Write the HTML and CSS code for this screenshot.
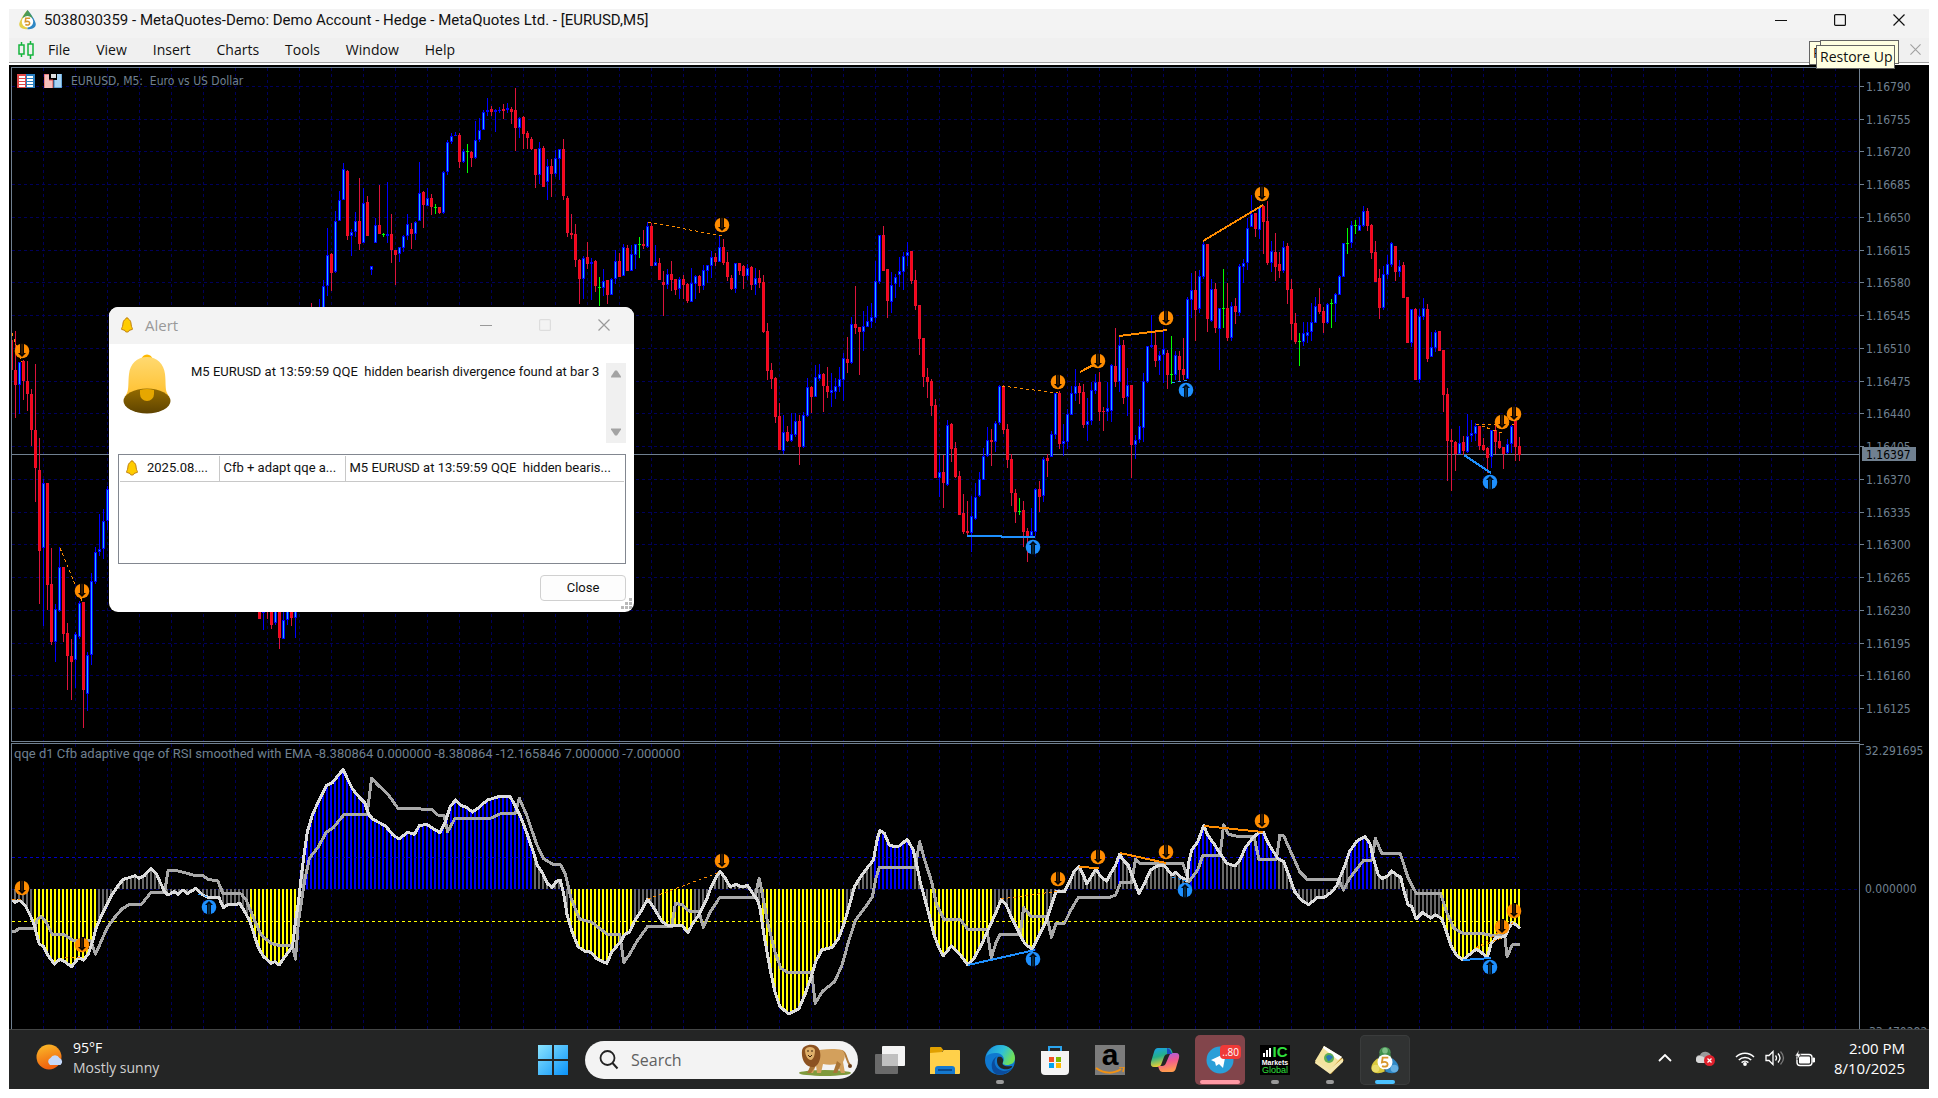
FILE: index.html
```html
<!DOCTYPE html>
<html lang="en">
<head>
<meta charset="utf-8">
<title>5038030359 - MetaQuotes-Demo: Demo Account - Hedge - MetaQuotes Ltd. - [EURUSD,M5]</title>
<link rel="stylesheet" href="styles.css">
</head>
<body>
<svg class="defs" aria-hidden="true">
  <defs>
    <symbol id="bell-small" viewBox="0 0 12 16"><path d="M6 0.800a1.300 1.300 0 0 1 1.300 1.300C9.500 3 10 5 10.200 8c.2 2 1.300 3 1.300 4.300L8 13.500a2 1.600 0 0 1-4 0L.5 12.300C.5 11 1.600 10 1.800 8 2 5 2.500 3 4.700 2.100A1.300 1.300 0 0 1 6 .8z" fill="#ffcc00" stroke="#c08010" stroke-width="1"/></symbol>
    <symbol id="mt5" viewBox="0 0 32 32">
      <circle cx="16" cy="8" r="6" fill="#4f9a5a"/><path d="M12 5a5 5 0 0 1 8 0l3 9H9z" fill="#3f8f4a"/>
      <path d="M8 14c-5 4-8 9-6 13 2 4 9 4 14 1z" fill="#d9c93c"/><path d="M24 14c5 4 8 9 6 13-2 4-9 4-14 1z" fill="#2f87c4"/>
      <circle cx="6" cy="25" r="4" fill="#e9dc6a"/><circle cx="26" cy="25" r="4" fill="#64aee0"/><circle cx="16" cy="6" r="3" fill="#7fc088"/>
      <circle cx="16" cy="18" r="8" fill="#fff"/>
      <path d="M19.500 13.500h-6l-.7 5c3-1 6-.5 6 2.200 0 2.300-3 3-6 1.800" fill="none" stroke="#d8962c" stroke-width="2"/>
    </symbol>
    <symbol id="mt5-drop" viewBox="0 0 21 24">
      <path d="M10.500 1C7 5 2 12 1 17c0 5 5 6 9.500 6z" fill="#e3cf4a"/><path d="M10.500 1c3.500 4 8.500 11 9.500 16 0 5-5 6-9.500 6z" fill="#2f87c4"/><path d="M10.500 1C8 4 6 7 4.500 10h12C15 7 13 4 10.500 1z" fill="#4a9a56"/>
      <circle cx="10.500" cy="14.500" r="6.500" fill="#fff"/>
      <path d="M13.500 10.500h-5l-.5 4c2.500-.8 5-.4 5 1.800 0 2-2.500 2.500-5 1.500" fill="none" stroke="#d8962c" stroke-width="1.800"/>
    </symbol>
    <symbol id="close-x" viewBox="0 0 12 12"><path d="M.5.500l11 11M11.500.500l-11 11" fill="none" stroke="currentColor" stroke-width="1.200"/></symbol>
    <symbol id="box" viewBox="0 0 12 12"><rect x=".6" y=".6" width="10.800" height="10.800" rx="1" fill="none" stroke="currentColor" stroke-width="1.200"/></symbol>
    <symbol id="dash" viewBox="0 0 12 12"><path d="M0 6.500h12" stroke="currentColor" stroke-width="1"/></symbol>
    <symbol id="mark-down" viewBox="0 0 16 16"><circle cx="8" cy="8" r="7.300" fill="#ff8c00"/><path d="M6 0v10H4l4 4 4-4h-2V0z" fill="#0a0500"/><path d="M8 1v10" stroke="#5a2c00"/></symbol>
    <symbol id="mark-up" viewBox="0 0 16 16"><circle cx="8" cy="8" r="7.300" fill="#1e90ff"/><path d="M6 16V6H4l4-4 4 4h-2v10z" fill="#000a18"/><path d="M8 15V5" stroke="#0a4a6a"/></symbol>
  </defs>
</svg>

<div class="desktop">
  <header class="titlebar">
    <svg class="icon-app"><use href="#mt5-drop"/></svg>
    <h1 class="title">5038030359 - MetaQuotes-Demo: Demo Account - Hedge - MetaQuotes Ltd. - [EURUSD,M5]</h1>
    <div class="caption">
      <button aria-label="Minimize"><svg><use href="#dash"/></svg></button>
      <button aria-label="Maximize"><svg><use href="#box"/></svg></button>
      <button aria-label="Close"><svg><use href="#close-x"/></svg></button>
    </div>
  </header>

  <nav class="menubar">
    <svg class="icon-candles" viewBox="0 0 16 18"><g fill="none" stroke="#14b43c" stroke-width="1.500"><path d="M3.500 1v3M3.500 13v3M12.500 0v3M12.500 14v4"/><rect x="1" y="4" width="5" height="9"/><rect x="10" y="3" width="5" height="11"/></g></svg>
    <button>File</button><button>View</button><button>Insert</button><button>Charts</button><button>Tools</button><button>Window</button><button>Help</button>
    <button class="mdi-close" aria-label="Close chart"><svg><use href="#close-x"/></svg></button>
    <div class="tip tip-a">R</div>
    <div class="tip tip-b"></div>
    <div class="tip tip-c">Restore Up</div>
  </nav>

  <main class="chart">
    <section class="panel price">
      <div class="plot">
        <svg class="canvas" id="price"></svg>
        <div class="legend">
          <svg class="icon-book" viewBox="0 0 18 14"><rect width="9" height="14" fill="#e04848"/><rect x="9" width="9" height="14" fill="#2a7fc0"/><path d="M2 3h6M2 6h6M2 9h6M2 12h6M10 3h6M10 6h6M10 9h6M10 12h6" stroke="#fff" stroke-width="2"/></svg>
          <svg class="icon-trade" viewBox="0 0 18 14"><path d="M0 0h5v6h4v8H0z" fill="#f6c0bc"/><path d="M18 0h-5v6h-3v8h8z" fill="#a8d4f4"/><path d="M0 14V0h5M9 14V6H5" fill="none" stroke="#e04848"/><path d="M18 0v14h-8V6" fill="none" stroke="#2a7fc0"/><path d="M7 0h5v4H7z" fill="#ddd"/></svg>
          <span>EURUSD, M5:&nbsp; Euro vs US Dollar</span>
        </div>
      </div>
      <svg class="axis" id="price-axis"></svg>
    </section>
    <section class="panel study">
      <div class="plot">
        <svg class="canvas" id="study"></svg>
        <div class="legend legend-study">qqe d1 Cfb adaptive qqe of RSI smoothed with EMA -8.380864 0.000000 -8.380864 -12.165846 7.000000 -7.000000</div>
      </div>
      <svg class="axis" id="study-axis"></svg>
    </section>

    <div class="dialog" role="dialog" aria-labelledby="alert-title">
      <div class="dialog-bar">
        <svg class="bell-s"><use href="#bell-small"/></svg>
        <h2 id="alert-title">Alert</h2>
        <div class="caption">
          <button aria-label="Minimize alert"><svg><use href="#dash"/></svg></button>
          <button class="faint" aria-label="Maximize alert" disabled><svg><use href="#box"/></svg></button>
          <button aria-label="Close alert"><svg><use href="#close-x"/></svg></button>
        </div>
      </div>
      <div class="dialog-body">
        <div class="message">
          <svg class="bell" viewBox="0 0 48 60">
            <defs><linearGradient id="gold" x2="0" y2="1"><stop stop-color="#ffd970"/><stop offset="1" stop-color="#ffbe28"/></linearGradient><linearGradient id="brown" x2="0" y2="1"><stop stop-color="#946b00"/><stop offset="1" stop-color="#5e4300"/></linearGradient></defs>
            <circle cx="24" cy="6" r="5.500" fill="#ffb900"/>
            <path d="M24 3c10 0 17 7 18 17 1 8 0 15 2 19 2 4 3 5 3 8H1c0-3 1-4 3-8 2-4 1-11 2-19C7 10 14 3 24 3z" fill="url(#gold)"/>
            <ellipse cx="24" cy="47" rx="23.500" ry="12.500" fill="url(#brown)"/>
            <path d="M17 36q7-2 14 0v4a7 7 0 0 1-14 0z" fill="#e6a700"/>
          </svg>
          <p>M5 EURUSD at 13:59:59 QQE&nbsp; hidden bearish divergence found at bar 3</p>
          <div class="scroll"><svg viewBox="0 0 10 8"><path d="M4 .5h2l4 6v1H0v-1z" fill="#a3a3a3"/></svg><svg viewBox="0 0 10 8"><path d="M4 7.500h2l4-6v-1H0v1z" fill="#a3a3a3"/></svg></div>
        </div>
        <div class="list">
          <table>
            <tr><td class="c1"><div><svg class="bell-s"><use href="#bell-small"/></svg>2025.08....</div></td><td class="c2">Cfb + adapt qqe a...</td><td>M5 EURUSD at 13:59:59 QQE&nbsp; hidden bearis...</td></tr>
          </table>
        </div>
        <button class="close-btn">Close</button>
      </div>
      <svg class="grip" viewBox="0 0 12 12"><path d="M9 0h3v3H9zM5 4h3v3H5zM9 4h3v3H9zM1 8h3v3H1zM5 8h3v3H5zM9 8h3v3H9z" fill="#b8b8b8"/></svg>
    </div>
  </main>

  <footer class="taskbar">
    <div class="weather">
      <svg viewBox="0 0 28 28"><defs><linearGradient id="sun" x2="0.300" y2="1"><stop stop-color="#fbbf2a"/><stop offset="1" stop-color="#f0600e"/></linearGradient></defs><circle cx="13" cy="13" r="12.500" fill="url(#sun)"/><path d="M14 21a4 4 0 0 1 .5-7 5 5 0 0 1 9 0 4 4 0 0 1 1 7z" fill="#c4d8fa"/></svg>
      <p>95°F<br><span>Mostly sunny</span></p>
    </div>
    <div class="apps">
      <button class="app" aria-label="Start"><svg viewBox="0 0 30 30"><defs><linearGradient id="win" x2="1" y2="1"><stop stop-color="#8ae4ff"/><stop offset="1" stop-color="#0a92f8"/></linearGradient></defs><path d="M0 0h14v14H0zM16 0h14v14H16zM0 16h14v14H0zM16 16h14v14H16z" fill="url(#win)"/></svg></button>
      <label class="search">
        <svg class="lens" viewBox="0 0 20 20"><circle cx="8.500" cy="8" r="7" fill="none" stroke="#222" stroke-width="1.800"/><path d="M13.500 13l5 5.500" stroke="#222" stroke-width="2"/></svg>
        <input type="text" placeholder="Search" aria-label="Search">
        <svg class="lion" viewBox="0 0 54 34">
          <ellipse cx="27" cy="30" rx="26" ry="3" fill="#7f9a3c"/>
          <path d="M44 8c5 2 4 10 8 14" fill="none" stroke="#b07a3a" stroke-width="2"/><circle cx="52" cy="23" r="2" fill="#6a3d18"/>
          <path d="M14 9c8-3 22-4 30-2 4 3 3 9 1 12l2 11h-4l-4-9c-5 1-10 1-14 0l-2 9h-4l-1-8-3 8h-4z" fill="#d3a05c"/>
          <path d="M14 20l-5 10h4l6-9zM39 18l-4 12h4l4-9z" fill="#a87436"/>
          <path d="M4 8C4 1 18-1 21 6c3 6 1 16-5 18C8 25 3 17 4 8z" fill="#8c5221"/>
          <path d="M7 7c1-4 9-4 10 0 0 4-1 9-4 10-4 0-6-6-6-10z" fill="#dfb06b"/><path d="M9 8h2M13 8h2M10 12l2 2 2-2" stroke="#3a200c" fill="none"/>
        </svg>
      </label>
      <button class="app" aria-label="Task view"><svg viewBox="0 0 30 30"><rect x="7" y="1" width="23" height="20" rx="1" fill="#f4f4f4"/><rect y="9" width="23" height="20" rx="1" fill="#777" fill-opacity=".85"/><rect x="7" y="9" width="16" height="12" fill="#c0c0c0"/></svg></button>
      <button class="app" aria-label="File Explorer"><svg viewBox="0 0 30 30"><path d="M0 3q0-1 1-1h10l3 4h-2v4H0z" fill="#e0a000"/><path d="M0 8l12-1 2-2h15q1 0 1 1v22q0 1-1 1H0z" fill="#ffd04a"/><path d="M5 29v-5q0-3 3-3h14q3 0 3 3v5z" fill="#1579cf"/><path d="M8 25h14" stroke="#0b4a8c" stroke-width="2"/></svg></button>
      <button class="app run" aria-label="Edge"><svg viewBox="0 0 30 30"><defs><linearGradient id="edge" x2="1" y2=".4"><stop stop-color="#1a8fe0"/><stop offset=".6" stop-color="#2ec0d8"/><stop offset="1" stop-color="#6fe05a"/></linearGradient></defs><circle cx="15" cy="15" r="15" fill="#0f78d0"/><path d="M1 12C3 4 9 0 15 0c9 0 15 6 15 13 0 5-4 7-8 7-3 0-5-1-4-3 2-2 1-8-6-9C6 8 3 9 1 12z" fill="url(#edge)"/><path d="M13 11c-6 3-4 14 6 15 3 0 6-1 8-3-4 6-11 8-16 6C5 26 5 14 13 11z" fill="#0b4c9c"/><path d="M13 12c3-1 6 1 5 5-2 3 2 5 8 4 2 0 1 1 0 2-5 3-14 1-14-7 0-2 0-3 1-4z" fill="#242525"/></svg></button>
      <button class="app" aria-label="Store"><svg viewBox="0 0 30 30"><path d="M9 7V2h12v5" fill="none" stroke="#2aa4ee" stroke-width="2"/><path d="M1 6h28v20q0 4-4 4H5q-4 0-4-4z" fill="#f4f4f4"/><path d="M9 12h5v5H9z" fill="#f25022"/><path d="M16 12h5v5h-5z" fill="#7fba00"/><path d="M9 18h5v5H9z" fill="#00a4ef"/><path d="M16 18h5v5h-5z" fill="#ffb900"/></svg></button>
      <button class="app" aria-label="Amazon"><span class="amazon">a<svg viewBox="0 0 30 8"><path d="M1 1c8 6 18 6 25 1" fill="none" stroke="#f29111" stroke-width="2"/><path d="M24 0l5 0-1 5" fill="none" stroke="#f29111" stroke-width="1.500"/></svg></span></button>
      <button class="app" aria-label="Copilot"><svg viewBox="0 0 30 30"><defs><linearGradient id="cpa" x2=".3" y2="1"><stop stop-color="#18a0f0"/><stop offset=".5" stop-color="#25b08a"/><stop offset="1" stop-color="#f4d030"/></linearGradient><linearGradient id="cpb" x2=".2" y2="1"><stop stop-color="#a060f0"/><stop offset=".5" stop-color="#f05a90"/><stop offset="1" stop-color="#ff9a50"/></linearGradient></defs><path d="M8 3h11q2 0 3 3l1 3h-5q-3 0-4 3l-3 8q-1 2-4 2H4q-4 0-3-5L4 7q1-4 4-4z" fill="url(#cpa)"/><path d="M22 27H12q-2 0-3-3l-1-3h4q3 0 4-3l3-7q1-3 4-3h3q4 0 3 5l-3 10q-1 4-4 4z" fill="url(#cpb)"/><path d="M17 3q3 0 5 6h-5z" fill="#1a4ac0"/></svg></button>
      <button class="app alerting" aria-label="Telegram"><svg viewBox="0 0 30 30"><circle cx="15" cy="15" r="13.500" fill="#2a9fd8"/><path d="M6 15l15-7-3 15-4-4-3 2-1-4z" fill="#fff"/></svg><span class="badge">..80</span></button>
      <button class="app run" aria-label="IC Markets Global"><span class="ic"><b><svg viewBox="0 0 10 10"><path d="M0 6h2v4H0zM3 3h2v7H3zM6 1h2v9H6z" fill="#fff"/></svg>IC</b><i>Markets</i><em>Global</em></span></button>
      <button class="app run" aria-label="Strategy book"><svg viewBox="0 0 30 30"><path d="M9 1l20 14-13 14L0 18z" fill="#c9962a"/><path d="M1 15l14 9 13-11v4L15 29 0 18z" fill="#f4e7b0"/><path d="M9 1l18 11-12 13L0 16z" fill="#f4e4a0"/><path d="M9 1l18 11-4 3L8 3z" fill="#fff"/><circle cx="14" cy="13" r="5" fill="#5fae52"/><path d="M11 12c2-3 5-2 7 0-2 2-3 4-5 4z" fill="#2a78b8"/></svg></button>
      <button class="app current" aria-label="MetaTrader 5"><svg><use href="#mt5"/></svg></button>
    </div>
    <div class="tray">
      <svg class="t-chev" viewBox="0 0 14 8"><path d="M1 7l6-6 6 6" fill="none" stroke="#fff" stroke-width="1.800"/></svg>
      <svg class="t-cloud" viewBox="0 0 20 16"><path d="M5 13a4 4 0 0 1 0-8 6 6 0 0 1 11 1 4 4 0 0 1 1 7z" fill="#9a9a9a"/><path d="M4 13a3.500 3.500 0 0 1 1-7c4 0 6 3 9 7z" fill="#d8d8d8"/><circle cx="14.500" cy="10.500" r="5.500" fill="#e0202c"/><path d="M12.500 8.500l4 4M16.500 8.500l-4 4" stroke="#fff" stroke-width="1.300"/></svg>
      <svg class="t-wifi" viewBox="0 0 20 15"><g fill="none" stroke="#fff" stroke-width="1.500"><path d="M1 6a12.500 12.500 0 0 1 18 0M3.800 9a8.700 8.700 0 0 1 12.400 0M6.600 11.600a5 5 0 0 1 6.800 0"/></g><circle cx="10" cy="13" r="1.900" fill="#fff"/></svg>
      <svg class="t-snd" viewBox="0 0 20 16"><path d="M1 5.500h3l4-4v13l-4-4H1z" fill="none" stroke="#fff" stroke-width="1.300"/><path d="M10.500 5.500q2 2.500 0 5M13 3.500q4 4.500 0 9" fill="none" stroke="#fff" stroke-width="1.300"/><path d="M15.500 1.500q6 6.500 0 13" fill="none" stroke="#777" stroke-width="1.300"/></svg>
      <svg class="t-bat" viewBox="0 0 21 17"><rect x="2" y="4.500" width="15" height="11" rx="3" fill="none" stroke="#fff" stroke-width="1.400"/><rect x="4" y="6.500" width="11" height="7" rx="1" fill="#fff"/><path d="M18 8h1.500v4H18z" fill="#fff" stroke="#fff"/><path d="M4 0L0 6h2.500L2 10l4-6H3.500z" fill="#fff" stroke="#242525" stroke-width=".5"/></svg>
      <p class="clock">2:00 PM<br>8/10/2025</p>
    </div>
  </footer>
</div>
<script src="chart.js"></script>
</body>
</html>
```
FILE: styles.css
```css
* { box-sizing: border-box; }
body { margin: 0; background: #fff; font: 14px/20px "Open Sans", "Noto Sans", sans-serif; color: #111; }
h1, h2, p { margin: 0; font-weight: 400; }
button { border: 0; padding: 0; background: none; font: inherit; color: inherit; }
svg { display: block; flex: none; }
.defs { position: absolute; width: 0; height: 0; }

.desktop { display: flex; flex-direction: column; height: 100vh; padding: 9px; }

.titlebar { display: flex; align-items: center; height: 29px; padding: 0 24px 8px 8px; background: #f3f3f3; }
.icon-app { width: 21px; height: 21px; margin-right: 6px; }
.title { flex: 1; font: 15px/20px Roboto, sans-serif; white-space: nowrap; }
.caption { display: flex; align-items: center; gap: 47px; }
.caption svg { width: 12px; height: 12px; }

.menubar { position: relative; display: flex; align-items: center; height: 27px; padding: 0 8px 2px 9px; background: #f0f0f0; border-bottom: 2px solid #fff; box-shadow: inset 0 -1px #a0a0a0; }
.icon-candles { width: 16px; height: 18px; margin-right: 1px; }
.menubar button { padding: 0 13px; }
.menubar .mdi-close { margin-left: auto; padding: 0; color: #a0a0a0; }
.mdi-close svg { width: 11px; height: 11px; }
.tip { position: absolute; width: 79px; height: 24px; padding: 1px 3px; background: #ffffe1; border: 1px solid #646464; line-height: 20px; white-space: nowrap; }
.tip-a { right: 41px; top: 3px; }
.tip-b { right: 30px; top: 2px; }
.tip-c { right: 34px; top: 7px; z-index: 1; }

.chart { position: relative; flex: 1; display: flex; flex-direction: column; gap: 1px; min-height: 0; padding: 2px 0 0 2px; background: #000; color: #708090; font: 12px/16px "DejaVu Sans Condensed", "DejaVu Sans", sans-serif; }
.panel { display: grid; grid-template-columns: 1fr 69px; min-height: 0; }
.price { flex: 675; }
.study { flex: 286; }
.plot { position: relative; border: 1px solid #708090; min-height: 0; overflow: hidden; }
.study .plot { border-bottom: 0; }
.canvas { position: absolute; inset: 0; width: 100%; height: 100%; }
.axis { width: 69px; height: 100%; min-height: 0; overflow: hidden; }
.axis text { fill: #708090; font-size: 12px; }
.axis .bid { fill: #000; }
.legend { position: relative; display: flex; align-items: center; gap: 9px; padding: 5px; white-space: nowrap; }
.legend-study { padding: 2px; font: 13px/16px Roboto, sans-serif; }
.icon-book, .icon-trade { width: 18px; height: 14px; }

.dialog { position: absolute; left: 100px; top: 242px; width: 525px; height: 305px; display: flex; flex-direction: column; background: #fff; border-radius: 9px; overflow: hidden; color: #111; font: 13px/16px Roboto, sans-serif; }
.dialog-bar { display: flex; align-items: center; height: 37px; padding: 0 24px 2px 12px; background: #f3f3f3; color: #999; }
.dialog-bar h2 { flex: 1; padding-left: 12px; font: 15px/20px "Open Sans", sans-serif; }
.bell-s { width: 12px; height: 16px; }
.faint { color: #ddd; }
.dialog-body { flex: 1; display: flex; flex-direction: column; padding: 10px 8px 11px 9px; }
.message { display: flex; align-items: flex-start; height: 100px; padding-left: 5px; }
.bell { width: 48px; height: 60px; }
.message p { flex: 1; min-width: 0; padding: 10px 0 0 20px; white-space: nowrap; }
.scroll { flex: none; display: flex; flex-direction: column; justify-content: space-between; align-items: center; width: 20px; height: 80px; margin-top: 9px; padding: 7px 0; background: #f0f0f0; }
.scroll svg { width: 10px; height: 8px; }
.list { height: 110px; padding: 1px; border: 1px solid #828790; }
.list table { width: 100%; table-layout: fixed; border-collapse: collapse; white-space: nowrap; }
.list td { height: 25px; padding: 0 4px; border-bottom: 1px solid #c8c8c8; overflow: hidden; }
.list td + td { border-left: 1px solid #c8c8c8; }
.list .c1 { width: 99px; }
.list .c1 div { display: flex; align-items: center; gap: 9px; padding-left: 2px; }
.list .c2 { width: 126px; }
.close-btn { align-self: flex-end; width: 86px; height: 26px; margin-top: 11px; background: #fdfdfd; border: 1px solid #d0d0d0; border-radius: 4px; }
.grip { position: absolute; right: 2px; bottom: 2px; width: 12px; height: 12px; }

.taskbar { display: grid; grid-template-columns: 1fr auto 1fr; align-items: center; height: 60px; background: #242525; border-top: 1px solid #444646; color: #fff; }
.weather { display: flex; align-items: center; gap: 9px; padding: 0 0 3px 27px; }
.weather svg { width: 28px; height: 28px; }
.weather span { color: #d0d0d0; }
.apps { display: flex; align-items: center; gap: 5px; }
.app { position: relative; display: flex; justify-content: center; align-items: center; width: 50px; height: 50px; border-radius: 5px; }
.app > svg { width: 30px; height: 30px; }
.run::after, .alerting::after, .current::after { content: ""; position: absolute; left: 50%; bottom: 1px; width: 8px; height: 4px; margin-left: -4px; border-radius: 2px; background: #9a9a9a; }
.alerting { background: #82454b; }
.alerting::after { width: 40px; margin-left: -20px; background: #ff99a4; }
.current { background: #303232; box-shadow: inset 0 0 0 1px #3a3c3c; }
.current::after { width: 20px; margin-left: -10px; background: #4cc2ff; }
.badge { position: absolute; right: 4px; top: 10px; height: 14px; padding: 0 2px; border-radius: 4px; background: #f03a38; font-size: 10px; line-height: 14px; }
.amazon { display: flex; flex-direction: column; align-items: center; width: 30px; height: 30px; background: #7c7c7c; color: #000; font: 700 30px/20px "Liberation Sans", sans-serif; }
.amazon svg { width: 30px; height: 8px; margin-top: 2px; }
.ic { display: flex; flex-direction: column; align-items: center; width: 30px; height: 30px; background: #000; color: #fff; font: 8px/8px "Liberation Sans", sans-serif; }
.ic b { display: flex; align-items: flex-end; color: #2fe03c; font-size: 15px; line-height: 14px; }
.ic b svg { width: 10px; height: 10px; margin-bottom: 2px; }
.ic i { font-style: normal; font-weight: 700; font-size: 7px; line-height: 7px; }
.ic em { font-style: normal; color: #2fe03c; font-size: 9px; line-height: 9px; }
.search { display: flex; align-items: center; width: 273px; height: 38px; margin: 0 2px; padding: 0 6px 0 14px; border-radius: 19px; background: #f3f3f3; }
.lens { width: 20px; height: 20px; }
.search input { flex: 1; min-width: 0; padding: 0 0 0 12px; border: 0; background: none; font: 16px/20px "Open Sans", sans-serif; }
.search input::placeholder { color: #606060; opacity: 1; }
.lion { width: 54px; height: 34px; }
.tray { display: flex; align-items: center; justify-content: flex-end; padding: 0 24px 3px 0; }
.t-chev { width: 14px; height: 8px; margin-right: 23px; }
.t-cloud { width: 20px; height: 16px; margin-right: 20px; }
.t-wifi { width: 20px; height: 15px; margin-right: 10px; }
.t-snd { width: 20px; height: 16px; margin-right: 10px; }
.t-bat { width: 21px; height: 17px; }
.clock { width: 89px; font-size: 15px; text-align: right; }
```
FILE: chart.js
```js
const NS = "http://www.w3.org/2000/svg";
const STEP = 4;

function add(parent, tag, attrs, text) {
  const node = document.createElementNS(NS, tag);
  for (const k in attrs) node.setAttribute(k, attrs[k]);
  if (text) node.textContent = text;
  parent.appendChild(node);
  return node;
}

/* Each run of bars starts at x; levels are high, body top, body bottom, low,
   counted from y0 in steps of 1/k px. r = falling, b = rising, g = unchanged. */
const runs = [
  { x: 11, y0: 80, k: 2.306, bars: "r563,600,668,670 r578,668,703,779 b650,650,703,771 r646,648,694,738 r648,694,725,763 r713,725,808,843 r656,808,895,973 r826,899,1085,1208 b920,930,1080,1258 r930,930,1165,1222 r1080,1163,1296,1303 b1208,1220,1296,1341 b1078,1122,1225,1227 r1122,1124,1277,1296 r1253,1275,1329,1407 r1289,1329,1341,1429 b1272,1277,1338,1403 b1201,1205,1284,1289 r1203,1204,1407,1494 b1320,1327,1415,1456 b1137,1156,1325,1348 b1077,1089,1158,1163 b1001,1082,1089,1098 b989,1016,1082,1104 b937,944,1016,1037" },
  { x: 259, y0: 80, k: 2.306, bars: "r1200,1200,1243,1243 b1200,1200,1230,1268 r1200,1210,1215,1243 r1200,1200,1257,1265 b1200,1200,1252,1257 r1200,1200,1287,1312 b1227,1246,1289,1290 b1200,1200,1246,1257 r1200,1200,1241,1260 b1200,1200,1241,1286" },
  { x: 311, y0: 80, k: 2.306, bars: "r514,530,540,540 b540,540,560,560 b506,530,540,540 b461,474,530,560 b341,403,474,497 r399,401,444,487 b303,324,443,445 b256,276,324,324 b192,206,276,277 r208,210,360,369 b343,350,360,407 b305,326,350,362 r226,326,378,391 b250,283,377,377 r267,281,360,360 b428,428,438,449 b319,335,377,377 r243,335,354,354 g353,356,356,362 b236,356,360,376 r308,355,393,422 r392,392,403,473 b384,386,402,419 b357,359,387,397 b310,333,359,368 r330,343,354,390 b326,328,354,370 b190,260,326,326 r257,258,288,341 b250,272,290,291 r262,271,293,312 g286,294,294,310 r292,293,307,308 b210,213,306,308 b139,143,213,219 b122,129,143,148 b121,127,129,129 r122,127,190,202 b158,163,190,191 g148,163,163,214 r163,165,181,200 b94,138,181,182 b87,116,138,143 b70,73,116,116 b41,70,73,84 r60,68,73,83 b67,70,73,120 b63,70,72,75 r56,67,71,91 b52,65,70,77 r62,66,73,101 r18,70,111,163 b85,87,110,133 r84,86,125,158 r118,122,134,158 r132,135,160,162 r158,159,220,249 b142,157,220,239 r153,157,246,246 b183,198,236,277 r183,199,216,270 b162,181,216,224 b158,159,183,231 r136,158,267,277 r267,271,352,362 r309,352,357,366 r331,356,416,431 r413,414,460,517 b407,411,460,504 r374,409,424,436 b411,420,424,507 r414,418,475,490 g454,478,478,521 b436,463,480,497 r461,461,496,517 b456,458,495,494 b392,418,458,471" },
  { x: 619, y0: 180, k: 3, bars: "r220,243,290,290 b192,201,288,288 r195,204,272,272 b195,222,272,272 b192,192,224,268 g170,193,193,234 r150,192,198,207 b126,138,202,204 r130,138,258,258 b195,246,258,258 r234,249,300,300 r272,306,315,408 b267,282,315,327 r243,282,300,333 r297,297,330,345 b290,297,328,357 r285,297,315,357 r309,312,363,369 b264,309,366,366 b285,288,312,357 r285,288,318,339 b255,270,318,330 b255,255,273,309 b213,231,258,294 r219,231,246,258 b168,201,245,245 r177,201,249,255 r216,246,291,303 r285,294,327,330 b249,249,327,339 r249,249,273,285 r255,258,288,327 b252,264,288,300 r258,261,315,330 b264,294,315,345 r270,294,309,324 r285,306,456,459 r429,453,573,600 r549,570,597,627 r591,594,711,729 r669,708,810,810 b705,756,813,822 r738,756,783,786 b699,762,783,786 b699,723,765,771 r705,723,801,855 b696,705,801,804 b594,621,708,711 r618,621,651,699 b555,591,651,651 b552,582,597,603 r579,582,618,696 r561,618,636,654 b579,630,639,681 b594,618,636,657 b561,597,621,636 b519,534,600,663 r471,537,549,579 b411,432,549,552 r318,432,444,462 r441,441,456,585 b393,438,456,513 b378,423,441,441 b369,411,426,444 b243,303,414,429 b165,165,306,312 r138,165,273,273 r267,267,363,414 b276,315,366,399 b282,291,312,354 b231,273,285,321 b216,228,276,330 b186,216,228,258 r213,213,303,312 r270,300,378,390 r375,375,477,525 r474,474,591,621 r564,591,606,654 r597,603,678,708 r657,675,894,894 b825,876,894,951 r825,876,909,984 b720,735,915,918 r729,732,807,846 r786,804,891,894 r873,888,1005,1005 r942,999,1056,1062 r963,1053,1059,1068 b948,1008,1059,1116 b909,951,1017,1020 b876,897,948,951 b804,828,900,900 b741,780,828,831 r747,780,786,858 b723,729,786,816 b615,618,729,735 r615,618,750,762 r732,747,840,864 r822,837,939,978 r927,939,996,1029 g954,994,994,1005 r963,990,1056,1101 r1044,1053,1071,1146 b984,1053,1068,1071 b924,927,1056,1068 r903,927,951,996 b831,837,948,966 r822,834,843,891 b753,762,831,831 b639,639,765,777 r633,639,792,807 b732,783,792,828 b687,702,786,807 b618,639,705,705 b567,618,642,663 r609,618,639,672" },
  { x: 1083, y0: 170, k: 3, bars: "r642,666,765,774 b684,753,765,813 b636,660,753,765 b612,636,663,672 r606,636,726,753 r711,722,726,783 b636,714,726,753 b582,585,723,756 r474,588,636,651 b501,525,636,666 r510,525,684,702 b594,645,681,738 r645,645,825,924 b795,810,825,867 b717,768,810,819 b609,633,774,816 b528,528,636,639 b435,525,530,534 r480,525,573,591 b543,555,573,615 b483,537,555,639 r540,549,615,657 g498,613,613,642 b543,555,615,630 r543,558,600,636 r504,597,615,630 b381,387,627,627 b309,360,390,444 r303,360,420,513 b300,318,417,429 b213,222,321,327 r222,222,447,486 b327,357,453,456 r339,357,474,489 b414,414,477,600 g297,415,415,474 r339,414,504,513 b396,408,504,513 r384,408,426,462 b282,288,429,438 b267,279,291,339 b144,174,279,300 b75,132,171,171 r129,129,177,201 b108,111,180,207 r105,108,156,252 r93,153,279,285 b213,243,279,306 r189,246,291,333 r246,282,303,324 b213,231,303,309 r219,228,360,402 r327,357,462,510 r429,459,516,522 g489,514,514,588 b456,489,516,528 b456,486,498,519 b399,456,486,513 b381,408,459,459 r354,402,426,432 r411,423,459,489 b399,402,459,462 g387,400,400,474 b369,372,402,456 b315,318,375,375 b219,219,321,321 g174,220,220,252 b153,165,219,234 g150,166,166,192 b141,165,183,183 b108,123,168,171 r114,123,168,183 r162,165,249,267 r213,246,336,336 r297,324,414,447 b288,312,414,420 b255,282,315,327 b216,219,285,291 r228,228,306,333 b270,288,306,321 r276,285,384,384 r381,381,519,519 b417,417,519,531 r414,417,630,630 b417,438,630,639 b384,414,441,450 r402,417,567,576 b486,531,561,561 b480,486,534,546 r483,483,543,543 r540,540,675,726 r654,672,813,933 r777,810,816,963 r813,816,852,903 b768,819,852,852 r798,816,843,855 b732,798,846,849 b750,789,798,816 b759,768,792,813 r768,768,828,840 r804,825,840,843 r831,834,864,909 b780,780,861,894 r762,780,816,852 r789,813,834,837 r831,831,852,897 b807,822,849,852 b765,768,822,849 r750,753,831,873 r801,828,855,873" }
];

/* Oscillator curves in two sections: x = x0 + u/2.01, y = 735 + v/3. */
const fast = [
  [0, "24,495 30,502 40,495 52,515 62,545 70,575 74,600 79,627 88,635 97,662 109,687 121,672 130,680 144,695 158,668 168,675 178,655 186,620 193,580 203,545 213,515 225,480 238,450 248,433 262,427 271,422 280,430 290,422 304,400 315,418 323,445 331,470 338,480 350,470 358,478 368,465 376,476 394,460 405,478 418,487 440,487 449,518 460,507 470,510 482,505 492,530 502,558 510,595 520,640 530,665 545,685 552,680 561,690 575,660 588,635 594,560 600,500 606,420 612,350 618,290 628,240 640,200 656,152 668,143 690,103 698,130 708,160 718,180 733,203 742,240 750,253 775,273 790,300 802,312 820,292 833,298 843,272 858,268 868,278 884,293 895,262 905,215 916,195 925,210 937,217 950,231 962,218 980,195 1005,184 1025,184 1035,210 1045,240 1058,290 1072,350 1080,390 1090,412 1100,445 1110,457 1118,440 1126,435 1133,475 1140,540 1150,590 1162,635 1175,648 1188,652 1200,672 1220,685 1230,650 1248,620 1255,600 1266,590 1275,560 1290,525 1302,493 1315,520 1330,558 1340,570 1372,573 1383,593 1393,565 1405,540 1420,495 1430,455 1440,425 1448,410 1456,425 1468,455 1480,448 1490,455 1503,452 1515,480 1523,495"],
  [760, "0,520 8,600 20,700 30,770 40,815 58,837 78,822 90,780 102,730 112,680 124,645 145,637 158,610 168,570 178,520 190,455 200,430 215,400 228,375 236,310 241,287 250,295 260,330 270,335 280,333 296,313 308,345 315,390 322,440 340,540 350,600 360,640 368,663 385,633 400,655 418,690 430,670 445,630 460,580 475,530 485,493 495,510 505,545 520,590 532,625 547,643 560,605 575,560 585,515 595,470 612,470 622,440 632,408 641,395 650,420 657,447 675,402 685,425 697,438 705,415 715,390 723,358 730,375 740,390 750,430 762,475 773,445 785,405 800,392 812,390 820,405 828,420 835,412 845,425 858,437 862,380 868,345 880,320 892,272 900,300 912,325 925,355 938,385 955,393 965,375 975,340 990,310 1003,292 1012,292 1020,320 1030,345 1042,372 1053,380 1063,420 1075,470 1088,495 1103,509 1120,488 1135,487 1150,470 1160,450 1165,430 1175,395 1185,350 1200,318 1216,305 1226,325 1233,370 1243,420 1252,431 1262,422 1270,408 1278,418 1288,427 1295,470 1303,510 1310,515 1319,552 1332,532 1348,549 1358,540 1370,550 1380,590 1390,635 1400,660 1413,675 1425,660 1440,642 1450,652 1462,668 1470,625 1480,608 1498,605 1505,580 1512,563 1520,570 1528,580"]
];
const slow = [
  [0, "24,590 32,588 38,580 70,580 75,552 83,545 92,560 105,598 128,598 145,615 168,617 183,618 192,658 203,620 215,580 230,548 245,522 258,510 285,507 303,473 331,472 338,405 352,406 372,413 392,422 408,422 418,433 438,438 448,475 485,477 495,495 510,550 525,600 545,625 560,631 588,632 594,672 600,560 612,440 622,370 640,335 656,292 670,278 692,238 738,238 742,190 747,130 762,153 780,178 800,220 868,223 880,240 893,242 900,290 915,249 988,249 1005,237 1036,235 1044,190 1060,245 1078,325 1092,370 1110,387 1127,390 1137,420 1148,490 1165,552 1190,562 1220,597 1246,598 1254,682 1265,660 1280,620 1302,574 1350,574 1358,505 1372,510 1385,528 1405,528 1414,577 1428,530 1447,487 1518,487 1526,430"],
  [760, "0,440 15,560 30,650 42,700 55,712 104,713 111,805 125,770 150,740 165,690 178,620 192,555 210,520 226,485 233,430 240,397 312,397 321,320 330,370 345,440 355,510 370,553 402,553 418,583 456,583 465,668 475,620 483,598 523,598 530,518 545,545 577,545 586,607 595,566 612,565 625,525 640,487 703,487 715,480 725,442 747,442 755,373 763,385 850,385 862,440 880,405 890,362 925,360 932,270 942,298 960,304 993,304 1003,373 1038,373 1045,300 1053,303 1070,360 1085,410 1100,433 1163,434 1173,465 1185,430 1213,377 1230,375 1237,310 1250,355 1287,355 1302,425 1319,475 1368,475 1380,530 1395,580 1413,595 1450,595 1470,601 1497,600 1502,665 1512,630 1528,628"]
];

function points(sections) {
  return sections.flatMap(([x0, s]) => s.split(" ").map(p => {
    const [u, v] = p.split(",").map(Number);
    return [x0 + u / 2.0103, 735 + v / 3];
  }));
}

function grid(g, top, bottom, rows) {
  let d = "";
  for (let x = 43; x < 1859; x += 32) d += `M${x + .5} ${top}V${bottom}`;
  for (const y of rows) d += `M12 ${y + .5}H1859`;
  add(g, "path", { d, stroke: "#00005c", "stroke-dasharray": "3 3", fill: "none" });
}

function segments(g, list) {
  for (const [c, dashed, x1, y1, x2, y2] of list) {
    const a = { x1, y1, x2, y2, stroke: c === "o" ? "#ff8c00" : "#1e90ff", "stroke-width": dashed ? 1 : 2, "shape-rendering": "crispEdges" };
    if (dashed) a["stroke-dasharray"] = "3 3";
    add(g, "line", a);
  }
}

function marks(g, list) {
  for (const [dir, x, y] of list)
    add(g, "use", { href: "#mark-" + dir, x: x - 8, y: y - 8, width: 16, height: 16 });
}

/* Price panel */
const price = add(document.getElementById("price"), "g", { transform: "translate(-12 -68)" });
const rows = Array.from({ length: 20 }, (_, i) => Math.round(86 + i * 32.74));
grid(price, 68, 741, rows);
add(price, "path", { d: "M12 454.500H1859", stroke: "#708090" });

const d = { bw: "", bb: "", bi: "", rw: "", rb: "", ri: "", gw: "" };
for (const run of runs) {
  run.bars.split(" ").forEach((bar, i) => {
    const x = run.x + i * STEP;
    const [hi, top, bot, lo] = bar.slice(1).split(",").map(v => Math.round(run.y0 + v / run.k));
    const wick = `M${x} ${hi}h1V${Math.max(lo, hi + 1)}h-1z`;
    const h = Math.max(bot - top, 1);
    const body = `M${x - 1} ${top}h3v${h}h-3z`;
    const inner = h > 2 ? `M${x} ${top + 1}h1v${h - 2}h-1z` : "";
    if (bar[0] === "g") d.gw += wick + body;
    else if (bar[0] === "b") { d.bw += wick; d.bb += body; d.bi += inner; }
    else { d.rw += wick; d.rb += body; d.ri += inner; }
  });
}
add(price, "path", { d: d.bw + d.bb, fill: "#0000ff" });
add(price, "path", { d: d.bi, fill: "#1eb4ff" });
add(price, "path", { d: d.rw, fill: "#dc143c" });
add(price, "path", { d: d.rb, fill: "#e8102c" });
add(price, "path", { d: d.ri, fill: "#ff0010" });
add(price, "path", { d: d.gw, fill: "#00ff00" });

segments(price, [
  ["o", 1, 12, 333, 22, 362], ["o", 1, 60, 548, 82, 601], ["o", 1, 648, 222, 722, 236],
  ["o", 1, 1002, 386, 1058, 393], ["o", 1, 1476, 424, 1514, 425], ["o", 1, 1476, 424, 1502, 433],
  ["o", 0, 1080, 372, 1099, 362], ["o", 0, 1119, 336, 1167, 330], ["o", 0, 1203, 241, 1263, 205],
  ["b", 0, 967, 536, 1035, 537], ["b", 0, 1464, 455, 1491, 473], ["b", 1, 1172, 383, 1187, 380]
]);
marks(price, [
  ["down", 22, 351], ["down", 82, 591], ["down", 722, 225], ["down", 1058, 382], ["down", 1098, 361],
  ["down", 1166, 318], ["down", 1262, 194], ["down", 1502, 422], ["down", 1514, 414],
  ["up", 1033, 547], ["up", 1186, 390], ["up", 1490, 482]
]);

/* Price scale */
const pa = document.getElementById("price-axis");
rows.forEach((y, i) => {
  add(pa, "path", { d: `M0 ${y - 66.5}h4`, stroke: "#708090" });
  add(pa, "text", { x: 6, y: y - 62 }, (1.1679 - i * 0.00035).toFixed(5));
});
add(pa, "rect", { x: 2, y: 380, width: 54, height: 14, fill: "#708090" });
add(pa, "text", { x: 6, y: 392, class: "bid" }, "1.16397");

/* Oscillator panel */
const study = add(document.getElementById("study"), "g", { transform: "translate(-12 -744)" });
grid(study, 744, 1100, [889]);
const curve = points(fast);
const fill = { "#0000ff": "", "#ffff00": "", "#696969": "" };
for (let x = 14; x < 1520; x += STEP) {
  const j = curve.findIndex(p => p[0] >= x + 1);
  if (j < 1) continue;
  const [a, b] = [curve[j - 1], curve[j]];
  const y = Math.round(a[1] + (b[1] - a[1]) * (x + 1 - a[0]) / (b[0] - a[0]));
  fill[y < 857 ? "#0000ff" : y > 921 ? "#ffff00" : "#696969"] += `M${x} 889h2V${y}h-2z`;
}
for (const c in fill) add(study, "path", { d: fill[c], fill: c });
add(study, "path", { d: "M12 857.500H1519", stroke: "#0000c8", "stroke-dasharray": "3 3" });
add(study, "path", { d: "M12 921.500H1519", stroke: "#ffff00", "stroke-dasharray": "3 3" });
for (const [data, c] of [[slow, "#a9a9a9"], [fast, "#dcdcdc"]])
  add(study, "polyline", { points: points(data).join(" "), fill: "none", stroke: c, "stroke-width": 3, "stroke-linejoin": "round", "shape-rendering": "crispEdges" });
segments(study, [
  ["o", 1, 12, 899, 22, 900], ["o", 1, 65, 958, 83, 957], ["o", 1, 648, 899, 720, 872],
  ["o", 1, 1001, 899, 1060, 891], ["o", 1, 1476, 948, 1514, 922], ["o", 1, 1476, 948, 1502, 938],
  ["o", 0, 1079, 867, 1099, 868], ["o", 0, 1120, 853, 1166, 863], ["o", 0, 1204, 826, 1263, 832],
  ["b", 0, 968, 965, 1035, 950], ["b", 0, 1463, 960, 1491, 958],
  ["b", 1, 198, 894, 209, 897], ["b", 1, 1172, 877, 1186, 881]
]);
marks(study, [
  ["down", 22, 888], ["down", 82, 945], ["down", 722, 861], ["down", 1058, 879], ["down", 1098, 857],
  ["down", 1166, 852], ["down", 1262, 821], ["down", 1502, 927], ["down", 1514, 911],
  ["up", 209, 907], ["up", 1033, 959], ["up", 1185, 890], ["up", 1490, 967]
]);

const sa = document.getElementById("study-axis");
add(sa, "path", { d: "M0 1.500h4", stroke: "#708090" });
add(sa, "text", { x: 5, y: 12 }, "32.291695");
add(sa, "text", { x: 5, y: 150 }, "0.000000");
add(sa, "text", { x: 5, y: 293 }, "-33.470282");
```
